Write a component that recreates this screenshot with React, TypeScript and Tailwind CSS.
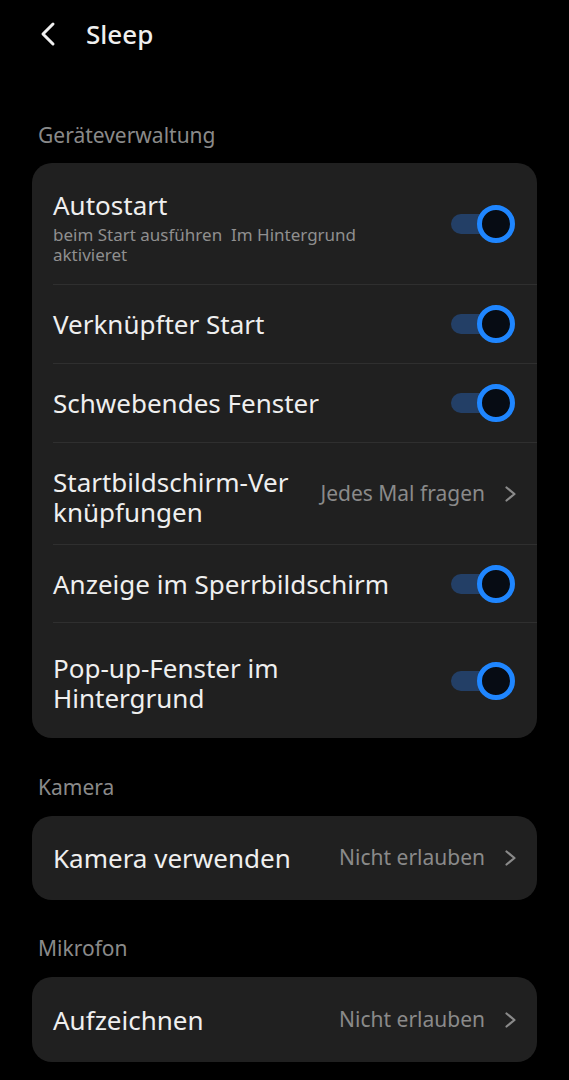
import React from "react";

function Toggle() {
  return (
    <div className="relative w-[64px] h-[38px] shrink-0">
      <div className="absolute left-0 top-[9px] w-[46px] h-[20px] rounded-full bg-[#233f66]" />
      <div className="absolute right-0 top-0 w-[38px] h-[38px] rounded-full border-[5px] border-[#1f86ff] bg-[#070c14]" />
    </div>
  );
}

function Chevron() {
  return (
    <svg width="14" height="20" viewBox="0 0 14 20" className="shrink-0">
      <path d="M3.5 3.5 L11.5 10 L3.5 16.5" fill="none" stroke="#8a8a8a" strokeWidth="2.2" strokeLinecap="round" strokeLinejoin="round" />
    </svg>
  );
}

function Divider() {
  return <div className="ml-[21px] h-px bg-[#2f2f2f]" />;
}

export default function App() {
  return (
    <div
      className="w-[569px] h-[1080px] bg-black text-[#efefef] overflow-hidden"
      style={{ fontFamily: '"Noto Sans", "Open Sans", sans-serif' }}
    >
      {/* Header */}
      <div className="flex items-center h-[68px] pl-[38px]">
        <svg width="20" height="26" viewBox="0 0 20 26" className="shrink-0">
          <path d="M15 3 L5 13 L15 23" fill="none" stroke="#efefef" strokeWidth="3" strokeLinecap="round" strokeLinejoin="round" />
        </svg>
        <span className="ml-[28px] text-[26px] font-medium leading-none">Sleep</span>
      </div>

      <div className="px-[32px]">
        <div className="pl-[6px] pt-[53px] pb-[14px] text-[21px] leading-[28px] text-[#8a8a8a]">Geräteverwaltung</div>

        <div className="rounded-[20px] bg-[#202020]">
          <div className="flex items-center h-[121px] pl-[21px] pr-[22px]">
            <div className="flex-1 pt-[8px]">
              <div className="text-[26px] leading-[30px]">Autostart</div>
              <div className="text-[17px] leading-[20px] text-[#8f8f8f] mt-[5px]">
                beim Start ausführen&nbsp; Im Hintergrund
                <br />
                aktivieret
              </div>
            </div>
            <Toggle />
          </div>
          <Divider />
          <div className="flex items-center h-[78px] pl-[21px] pr-[22px]">
            <div className="flex-1 text-[26px] leading-[30px]">Verknüpfter Start</div>
            <Toggle />
          </div>
          <Divider />
          <div className="flex items-center h-[78px] pl-[21px] pr-[22px]">
            <div className="flex-1 text-[26px] leading-[30px]">Schwebendes Fenster</div>
            <Toggle />
          </div>
          <Divider />
          <div className="flex items-center h-[101px] pl-[21px] pr-[20px]">
            <div className="flex-1 pt-[6px] text-[26px] leading-[30px]">
              Startbildschirm-Ver
              <br />
              knüpfungen
            </div>
            <span className="text-[21px] text-[#8a8a8a] mr-[18px]">Jedes Mal fragen</span>
            <Chevron />
          </div>
          <Divider />
          <div className="flex items-center h-[77px] pl-[21px] pr-[22px]">
            <div className="flex-1 text-[26px] leading-[30px]">Anzeige im Sperrbildschirm</div>
            <Toggle />
          </div>
          <Divider />
          <div className="flex items-center h-[115px] pl-[21px] pr-[22px]">
            <div className="flex-1 pt-[5px] text-[26px] leading-[30px]">
              Pop-up-Fenster im
              <br />
              Hintergrund
            </div>
            <Toggle />
          </div>
        </div>

        <div className="pl-[6px] pt-[35px] pb-[15px] text-[21px] leading-[28px] text-[#8a8a8a]">Kamera</div>
        <div className="rounded-[20px] bg-[#202020] flex items-center h-[84px] pl-[21px] pr-[20px]">
          <div className="flex-1 text-[26px] leading-[30px]">Kamera verwenden</div>
          <span className="text-[21px] text-[#8a8a8a] mr-[18px]">Nicht erlauben</span>
          <Chevron />
        </div>

        <div className="pl-[6px] pt-[34px] pb-[15px] text-[21px] leading-[28px] text-[#8a8a8a]">Mikrofon</div>
        <div className="rounded-[20px] bg-[#202020] flex items-center h-[85px] pl-[21px] pr-[20px]">
          <div className="flex-1 text-[26px] leading-[30px]">Aufzeichnen</div>
          <span className="text-[21px] text-[#8a8a8a] mr-[18px]">Nicht erlauben</span>
          <Chevron />
        </div>
      </div>
    </div>
  );
}
